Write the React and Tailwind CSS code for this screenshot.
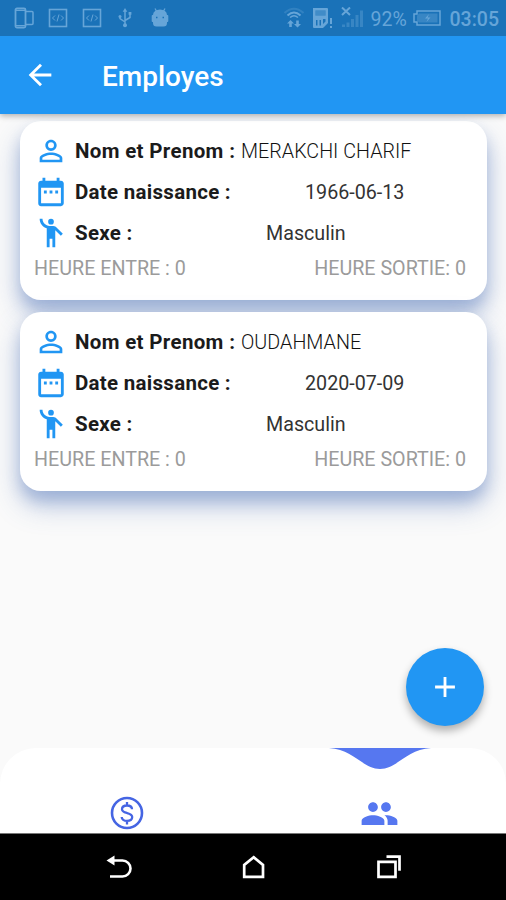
import {
    MdAdd,
    MdArrowBack,
    MdDateRange,
    MdEmojiPeople,
    MdPeople,
    MdPersonOutline
} from 'react-icons/md';

const employees = [
    { id: 1, name: 'MERAKCHI CHARIF', birth: '1966-06-13', sex: 'Masculin' },
    { id: 2, name: 'OUDAHMANE', birth: '2020-07-09', sex: 'Masculin' }
];

function CodeIcon() {
    return (
        <svg width="20" height="20" viewBox="0 0 20 20" fill="none" stroke="currentColor">
            <rect x="1.5" y="1.5" width="17" height="17" strokeWidth="1.6" />
            <path d="M7 7.5 4.5 10 7 12.5M13 7.5l2.5 2.5-2.5 2.5M11 6.5l-2 7" strokeWidth="1" />
        </svg>
    );
}

function DevicesIcon() {
    return (
        <svg width="20" height="22" viewBox="0 0 20 22" fill="none" stroke="currentColor">
            <rect x="1.5" y="1.5" width="10" height="19" rx="1.5" strokeWidth="1.8" />
            <path d="M1 3.5h10.5M1 18.5h10.5" strokeWidth="1" />
            <path d="M11.5 4.5H18q1 0 1 1v11q0 1-1 1h-6.5" strokeWidth="1.5" />
        </svg>
    );
}

function UsbIcon() {
    return (
        <svg width="14" height="20" viewBox="0 0 14 20" fill="none" stroke="currentColor" strokeWidth="1.5">
            <path d="M7 3v14M7 14 2 10.5V8.5M7 12.5l5-3V5.5" />
            <path d="M7 0 4.7 3.8h4.6zM10.6 4h2.8v2.8h-2.8z" fill="currentColor" stroke="none" />
            <circle cx="2" cy="8.5" r="1.5" fill="currentColor" stroke="none" />
            <circle cx="7" cy="17.3" r="2" fill="currentColor" stroke="none" />
        </svg>
    );
}

function AndroidIcon() {
    return (
        <svg width="18" height="20" viewBox="0 0 18 20">
            <path d="M4 .5 6 4M14 .5 12 4" stroke="currentColor" strokeWidth="1.3" />
            <path
                fillRule="evenodd"
                fill="currentColor"
                d="M2 7a7 5.5 0 0 1 14 0h.5q.8 0 .8 1v5q0 1-.8 1H16v1q0 3.5-3.5 3.5h-7Q2 18.5 2 15v-1h-.5q-.8 0-.8-1V8q0-1 .8-1zM5 8.8v1.5h1.5V8.8zM11.5 8.8v1.5H13V8.8z"
            />
        </svg>
    );
}

function WifiIcon() {
    return (
        <svg width="20" height="22" viewBox="0 0 20 22" fill="none" stroke="currentColor">
            <path d="M.5 6Q10-2.5 19.5 6" strokeWidth="2" opacity=".3" />
            <path d="M3.5 8.5q6.5-6 13 0" strokeWidth="2" />
            <path d="M6 10.5q4-3.5 8 0" strokeWidth="1.5" />
            <path
                d="m6.5 13 3.5 3.5H7.8V20H5.2v-3.5H3zM13.5 20.5 17 17h-2.2v-3.5h-2.6V17H10z"
                fill="currentColor"
                stroke="none"
            />
        </svg>
    );
}

function SimIcon() {
    return (
        <svg width="21" height="22" viewBox="0 0 21 22">
            <path
                fill="currentColor"
                fillRule="evenodd"
                d="M1 1h14q1 0 1 1v14l-5 5H2q-1 0-1-1zM3.5 3.5v5h10v-5zM4 13v5.5h1.5V13zM7.5 13v5.5H9V13zM11 12v5l2.5-2.5V12z"
            />
            <path fill="currentColor" opacity=".5" d="M3.5 3.5h10v5h-10z" />
            <path fill="currentColor" d="M18 11h2v6h-2zM18 19h2v2h-2z" />
        </svg>
    );
}

function SignalIcon() {
    return (
        <svg width="23" height="22" viewBox="0 0 23 22">
            <path d="M1 .5 9 8M9 .5 1 8" stroke="currentColor" strokeWidth="2" />
            <path
                fill="currentColor"
                opacity=".4"
                d="M1 17.5h3V20H1zM5.5 15.5h3V20h-3zM10 12h3v8h-3zM14.5 8h3v12h-3zM19 3.5h3V20h-3z"
            />
        </svg>
    );
}

function BatteryIcon() {
    return (
        <svg width="28" height="16" viewBox="0 0 28 16">
            <path d="M4 1h23v14H4v-3H1V4h3z" fill="none" stroke="currentColor" strokeWidth="1.5" />
            <path d="M6 3.5h18.5v9H6l-2-2v-5z" fill="currentColor" opacity=".4" />
            <path d="M16 4l-4 4.5h3L13.5 12l4-4.5h-3z" fill="currentColor" />
        </svg>
    );
}

function StatusBar() {
    return (
        <div className="flex h-9 shrink-0 items-center bg-[#1a72b8] text-[#66a5d8]">
            <div className="flex items-center pl-[14px]">
                <DevicesIcon />
                <div className="ml-[14px]"><CodeIcon /></div>
                <div className="ml-[14px]"><CodeIcon /></div>
                <div className="ml-4"><UsbIcon /></div>
                <div className="ml-[19px]"><AndroidIcon /></div>
            </div>
            <div className="ml-auto flex items-center pr-[7px]">
                <WifiIcon />
                <div className="ml-2"><SimIcon /></div>
                <div className="ml-2"><SignalIcon /></div>
                <span className="ml-[7px] w-[38px] pt-[3px] text-[19.5px] leading-none whitespace-nowrap">92%</span>
                <div className="ml-[4px]"><BatteryIcon /></div>
                <span className="ml-[9px] pt-[3px] text-[19.5px] leading-none font-medium">03:05</span>
            </div>
        </div>
    );
}

function EmployeeCard({ employee }) {
    return (
        <div className="h-[179px] rounded-[21px] bg-white px-[15px] pt-[9px] text-[19.7px] text-[#333] shadow-[0_14px_28px_rgba(66,106,180,0.38),0_10px_14px_rgba(66,106,180,0.24)]">
            <div className="flex h-[41px] items-center">
                <MdPersonOutline className="-ml-px size-[34px] text-[#2196f3]" />
                <b className="ml-[7px] w-[166px] pt-0.5 text-[20.5px] font-bold tracking-[0.33px] whitespace-nowrap text-[#1b1b1b]">
                    Nom et Prenom :
                </b>
                <span className="pt-0.5 font-light tracking-[0.03px] text-[#111]">{employee.name}</span>
            </div>
            <div className="flex h-[41px] items-center">
                <MdDateRange className="-ml-px size-[34px] text-[#2196f3]" />
                <b className="ml-[7px] w-[230px] pt-0.5 text-[20.5px] font-bold tracking-[0.28px] text-[#1b1b1b]">
                    Date naissance :
                </b>
                <span className="pt-0.5">{employee.birth}</span>
            </div>
            <div className="flex h-[41px] items-center">
                <MdEmojiPeople className="-ml-px size-[34px] text-[#2196f3]" />
                <b className="ml-[7px] w-[191px] pt-0.5 text-[20.5px] font-bold tracking-[0.28px] text-[#1b1b1b]">
                    Sexe :
                </b>
                <span className="pt-0.5">{employee.sex}</span>
            </div>
            <div className="flex h-[31px] items-center justify-between pr-[6px] text-[#9b9b9b]">
                <span className="-ml-px">HEURE ENTRE : 0</span>
                <span>HEURE SORTIE: 0</span>
            </div>
        </div>
    );
}

function BottomBar() {
    return (
        <div className="relative flex h-[85px] shrink-0 items-end rounded-t-[36px] bg-white">
            <svg className="absolute top-0 left-[329px]" width="102" height="22" viewBox="0 0 102 22">
                <path d="M0 0h102C78 1 68 21 51 21S24 1 0 0z" fill="#5677f0" />
            </svg>
            <div className="flex flex-1 justify-center pb-[3px]">
                <svg width="34" height="34" viewBox="0 0 34 34" fill="none" stroke="#4565e3">
                    <circle cx="17" cy="17" r="15" strokeWidth="2.6" />
                    <path
                        d="M22 13.3c0-2.3-2-3.8-5-3.8s-5 1.500-5 3.700c0 2.500 2.500 3.100 5 3.800s5.200 1.400 5.200 4-2.200 3.900-5.200 3.900-5.300-1.500-5.300-4M17 6v3.500M17 25v3.500"
                        strokeWidth="2.3"
                    />
                </svg>
            </div>
            <div className="flex flex-1 justify-center">
                <MdPeople className="size-[39px] text-[#5677f0]" />
            </div>
        </div>
    );
}

function NavBar() {
    return (
        <div className="flex h-[67px] shrink-0 items-center border-t border-[#777] bg-black pt-0.5">
            <svg className="ml-[106px]" width="26" height="26" viewBox="0 0 26 26" fill="none">
                <path d="M7 5.5h9.5a8 8 0 0 1 0 16H4" stroke="#fff" strokeWidth="2.6" />
                <path d="M.5 5.5 8.5.5v10z" fill="#fff" />
            </svg>
            <svg className="ml-[109px]" width="26" height="26" viewBox="0 0 26 26" fill="none">
                <path d="M3.2 21.8V10L12.7 2.2 22 10v11.8z" stroke="#fff" strokeWidth="2.7" />
            </svg>
            <svg className="ml-[109px]" width="26" height="26" viewBox="0 0 26 26" fill="none" stroke="#fff" strokeWidth="2.7">
                <path d="M2.5 6.8h17v15h-17zM10.5 1.7h13v14" />
            </svg>
        </div>
    );
}

export default function App() {
    return (
        <div className="flex h-[900px] w-[506px] flex-col overflow-hidden bg-[#fafafa] font-['Roboto',sans-serif]">
            <header className="z-10 shrink-0 shadow-[0_2px_6px_rgba(0,0,0,0.3)]">
                <StatusBar />
                <div className="flex h-[78px] items-center bg-[#2196f3] text-white">
                    <MdArrowBack className="ml-[23px] size-[34px]" />
                    <h1 className="ml-[45px] pt-1 text-[28px] font-medium">Employes</h1>
                </div>
            </header>
            <main className="relative flex flex-1 flex-col gap-3 pt-[7px] pr-[19px] pl-5">
                {employees.map((employee) => (
                    <EmployeeCard key={employee.id} employee={employee} />
                ))}
                <button className="absolute right-[22px] bottom-[22px] flex size-[78px] items-center justify-center rounded-full bg-[#2196f3] text-white shadow-[0_5px_9px_rgba(0,0,0,0.3)]">
                    <MdAdd className="size-[34px]" />
                </button>
            </main>
            <BottomBar />
            <NavBar />
        </div>
    );
}
